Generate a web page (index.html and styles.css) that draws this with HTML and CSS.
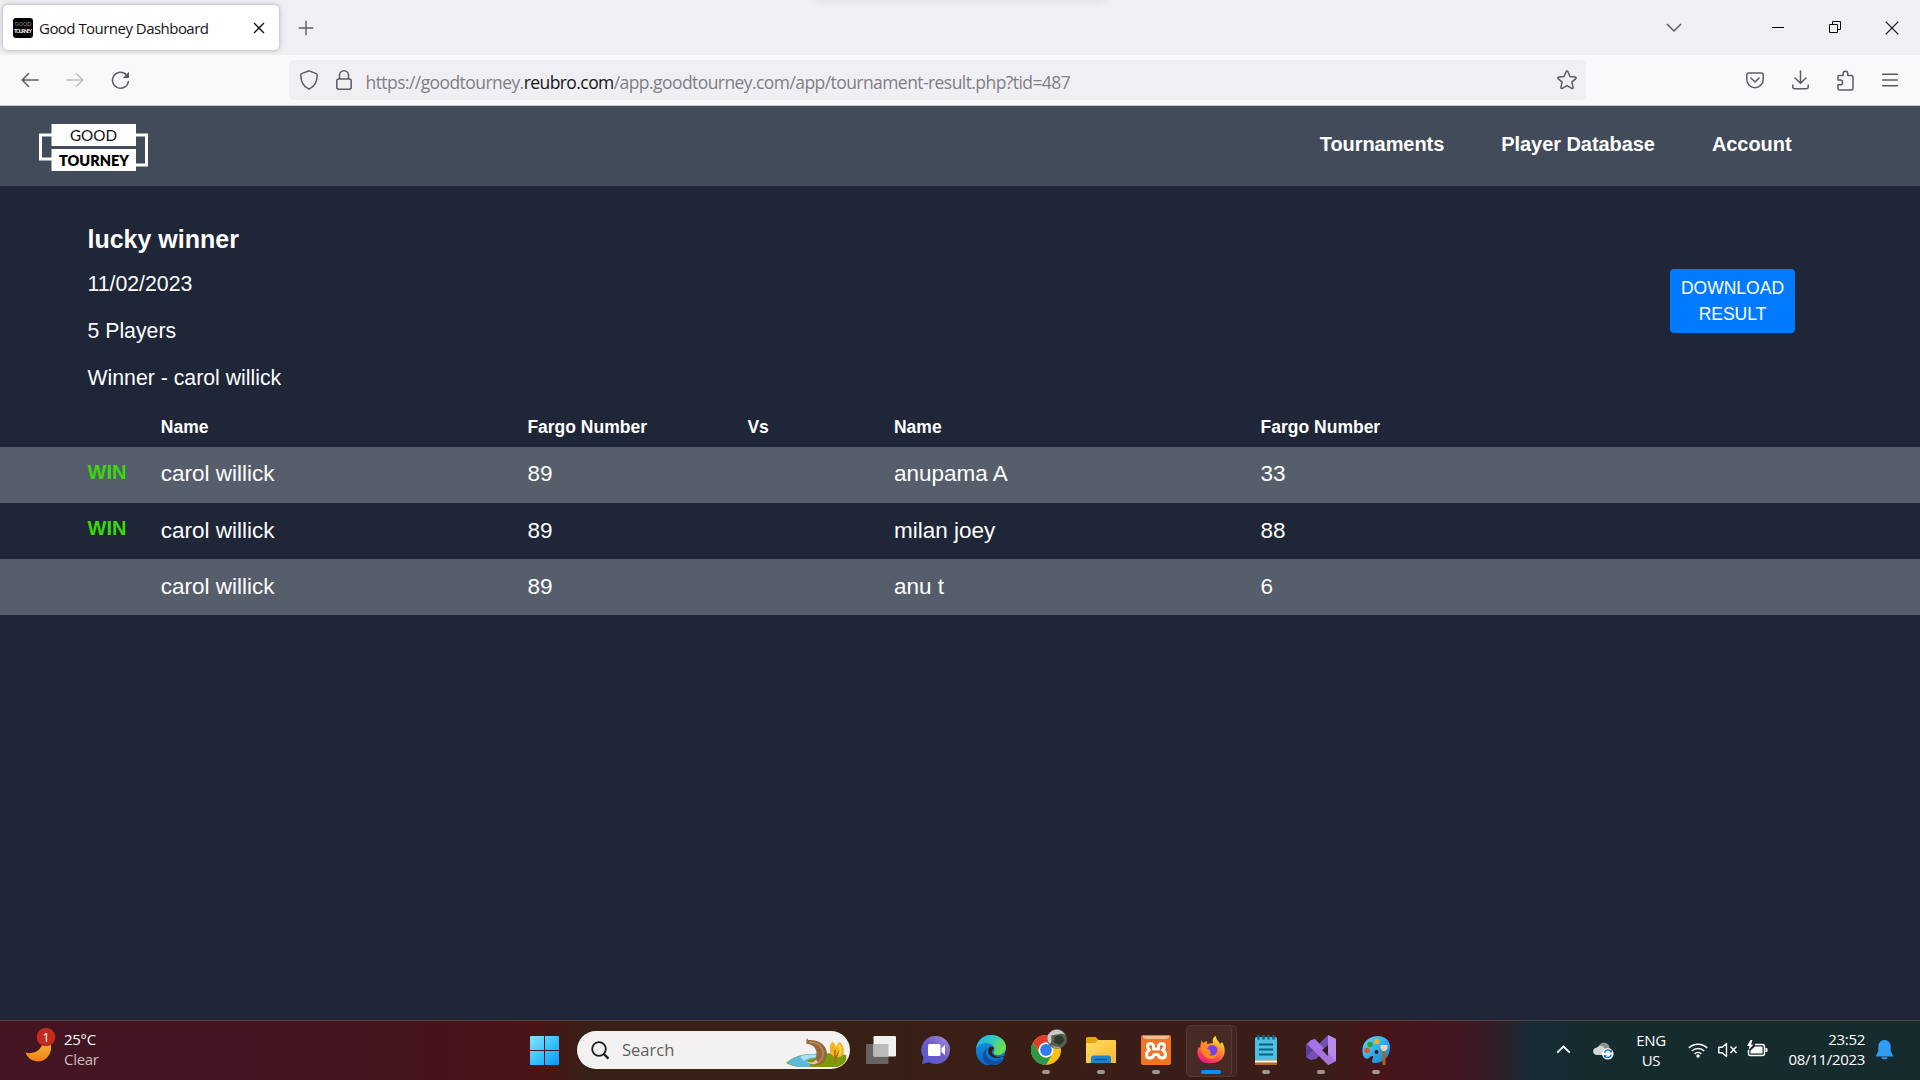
FILE: index.html
```
<!DOCTYPE html>
<html lang="en">
<head>
<meta charset="utf-8">
<title>Good Tourney Dashboard</title>
<link rel="stylesheet" href="styles.css">
</head>
<body>
<div class="tabstrip">
  <div class="tab">
    <svg class="favicon" width="20" height="20" viewBox="0 0 20 20"><rect width="20" height="20" rx="3" fill="#000"/><text x="10" y="8" text-anchor="middle" class="fav-top">GOOD</text><text x="10" y="15" text-anchor="middle" class="fav-bottom" textLength="18">TOURNEY</text></svg>
    <span class="tab-title">Good Tourney Dashboard</span>
    <svg class="tab-close" width="12" height="12" viewBox="0 0 12 12"><path d="M1 1l10 10M11 1L1 11" stroke="#15141a" stroke-width="1.4"/></svg>
  </div>
  <svg class="newtab" width="16" height="16" viewBox="0 0 16 16"><path d="M8 .7v14.6M.7 8h14.6" stroke="#5b5b66" stroke-width="1.4"/></svg>
  <div class="top-glow"></div>
  <div class="window-controls">
    <svg width="16" height="10" viewBox="0 0 16 10"><path d="M1 1l7 7 7-7" fill="none" stroke="#5b5b66" stroke-width="1.5"/></svg>
    <svg width="12" height="13" viewBox="0 0 12 13"><path d="M0 6.5h12" stroke="#000"/></svg>
    <svg width="13" height="13" viewBox="0 0 13 13"><path d="M.5 3.5h8v8h-8zM3.500 3.500v-3h8v8h-3" fill="none" stroke="#000"/></svg>
    <svg width="14" height="14" viewBox="0 0 14 14"><path d="M.7.7l12.600 12.600M13.300.7L.7 13.300" stroke="#111" stroke-width="1.200"/></svg>
  </div>
</div>
<div class="toolbar">
  <div class="nav-buttons">
    <svg width="18" height="16" viewBox="0 0 18 16"><path d="M17.500 8H1.500M8 1.200L1.200 8 8 14.800" fill="none" stroke="#5b5b66" stroke-width="1.500"/></svg>
    <svg width="18" height="16" viewBox="0 0 18 16"><path d="M.5 8h16M10 1.200L16.800 8 10 14.800" fill="none" stroke="#bdbdc2" stroke-width="1.500"/></svg>
    <svg width="19" height="19" viewBox="0 0 19 19"><path d="M15.700 4.200A8 8 0 1 0 17.400 10.500" fill="none" stroke="#5b5b66" stroke-width="1.500" stroke-linecap="round"/><path d="M18 .7v6.200h-6.200z" fill="#5b5b66"/></svg>
  </div>
  <div class="urlbar">
    <svg class="shield" width="18" height="20" viewBox="0 0 18 20"><path d="M9 .9l7.400 2.700c.6.200.8.700.8 1.300 0 6.500-2.200 11.500-8.200 14.200C3 16.400.8 11.400.8 4.900c0-.6.2-1.100.8-1.300z" fill="none" stroke="#5b5b66" stroke-width="1.500"/></svg>
    <svg class="lock" width="16" height="20" viewBox="0 0 16 20"><rect x=".8" y="9" width="14.400" height="10.200" rx="2" fill="none" stroke="#5b5b66" stroke-width="1.500"/><path d="M3.500 9V5.300a4.500 4.500 0 0 1 9 0V9" fill="none" stroke="#5b5b66" stroke-width="1.500"/></svg>
    <span class="url">https://goodtourney.<b>reubro.com</b>/app.goodtourney.com/app/tournament-result.php?tid=487</span>
    <svg class="star" width="20" height="20" viewBox="0 0 20 20"><path d="M10 1.100c.4 0 .7.200.9.600l2.100 4.800 5.200.5c.9.100 1.200 1 .6 1.600l-3.900 3.500 1.200 5.200c.2.900-.7 1.500-1.400 1.100L10 15.700l-4.700 2.700c-.7.400-1.600-.2-1.400-1.100l1.200-5.200-3.900-3.500C.6 8 .9 7.100 1.800 7l5.200-.5 2.100-4.800c.2-.4.500-.6.900-.6z" fill="none" stroke="#5b5b66" stroke-width="1.500"/></svg>
  </div>
  <div class="toolbar-actions">
    <svg width="18" height="17" viewBox="0 0 18 17"><path d="M3 .9h12c1.300 0 2.200.9 2.200 2.200v4.400a8.200 8.200 0 0 1-16.400 0V3.100C.8 1.800 1.700.9 3 .9z" fill="none" stroke="#5b5b66" stroke-width="1.500"/><path d="M4.900 6L9 10l4.100-4" fill="none" stroke="#5b5b66" stroke-width="1.600" stroke-linecap="round"/></svg>
    <svg width="17" height="20" viewBox="0 0 17 20"><path d="M8.500 1v12M3 8l5.500 5.300L14 8M.8 15v1.700c0 1.200.8 2 2 2h11.400c1.200 0 2-.8 2-2V15" fill="none" stroke="#5b5b66" stroke-width="1.500" stroke-linecap="round"/></svg>
    <svg width="17" height="21" viewBox="0 0 17 21"><path d="M1 8V6.600c0-.8.500-1.200 1.200-1.200h3.900V3.600a2.300 2.300 0 0 1 4.700 0v1.800h3.700c.9 0 1.500.6 1.500 1.500v11.500c0 .9-.6 1.500-1.500 1.500H2.500c-.9 0-1.500-.6-1.500-1.500v-3.600h2.200a2.400 2.400 0 0 0 0-4.800H1z" fill="none" stroke="#5b5b66" stroke-width="1.500" stroke-linejoin="round"/></svg>
    <svg width="16" height="14" viewBox="0 0 16 14"><path d="M.7 1.300h14.600M.7 7h14.600M.7 12.700h14.600" stroke="#5b5b66" stroke-width="1.500" stroke-linecap="round"/></svg>
  </div>
</div>
<header class="site-header">
  <svg class="logo" width="110" height="48" viewBox="0 0 110 48">
    <path d="M13 11H1.500v24H13M96 11h11.500v30H96" fill="none" stroke="#fff" stroke-width="3"/>
    <rect x="12.500" y="0" width="84.500" height="22" fill="#fff"/><rect x="12.500" y="25" width="84.500" height="22" fill="#fff"/>
    <text x="31" y="16.500" class="logo-good" textLength="47" lengthAdjust="spacingAndGlyphs">GOOD</text>
    <text x="20" y="42" class="logo-tourney" textLength="70" lengthAdjust="spacingAndGlyphs">TOURNEY</text>
  </svg>
  <nav class="site-nav"><a>Tournaments</a><a>Player Database</a><a>Account</a></nav>
</header>
<main class="content">
  <section class="summary">
    <div>
      <h1>lucky winner</h1>
      <p>11/02/2023</p>
      <p>5 Players</p>
      <p>Winner - carol willick</p>
    </div>
    <a class="download">DOWNLOAD RESULT</a>
  </section>
  <section class="results">
    <div class="row head"><span></span><span>Name</span><span>Fargo Number</span><span>Vs</span><span>Name</span><span>Fargo Number</span></div>
    <div class="row shaded first"><span class="win">WIN</span><span>carol willick</span><span>89</span><span></span><span>anupama A</span><span>33</span></div>
    <div class="row"><span class="win">WIN</span><span>carol willick</span><span>89</span><span></span><span>milan joey</span><span>88</span></div>
    <div class="row shaded"><span></span><span>carol willick</span><span>89</span><span></span><span>anu t</span><span>6</span></div>
  </section>
</main>
<footer class="taskbar">
  <div class="weather">
    <svg width="32" height="37" viewBox="0 0 32 37">
      <defs><linearGradient id="moon" x1="0" y1="0" x2="0" y2="1"><stop offset="0" stop-color="#f8c437"/><stop offset="1" stop-color="#ef7d1a"/></linearGradient></defs>
      <path d="M.5 25.500c8 2.500 18-2 17.500-14h6c3 6 3 13-1 18-6 8-19 6-22.500-4z" fill="url(#moon)"/>
      <circle cx="21" cy="10" r="9.300" fill="#c42b1c"/>
      <text x="21" y="14.800" text-anchor="middle" class="badge-text">1</text>
    </svg>
    <div class="weather-text"><span>25°C</span><span class="dim">Clear</span></div>
  </div>
  <div class="dock">
    <svg class="start" width="29" height="29" viewBox="0 0 29 29"><defs><linearGradient id="win" x1="0" y1="0" x2="1" y2="1"><stop offset="0" stop-color="#8be0ff"/><stop offset=".5" stop-color="#3cc4fb"/><stop offset="1" stop-color="#0798fc"/></linearGradient></defs><path d="M1 0h13v14H0V1a1 1 0 0 1 1-1zM15 0h13a1 1 0 0 1 1 1v13H15zM0 15h14v14H1a1 1 0 0 1-1-1zM15 15h14v13a1 1 0 0 1-1 1H15z" fill="url(#win)"/></svg>
    <div class="search">
      <svg width="19" height="19" viewBox="0 0 19 19"><circle cx="8" cy="8" r="6.800" fill="none" stroke="#1f1f1f" stroke-width="1.800"/><path d="M12.800 13L17.500 17.700" stroke="#1f1f1f" stroke-width="2.400"/></svg>
      <span>Search</span>
      <svg class="scene" width="61" height="30" viewBox="0 0 61 30">
        <path d="M0 25c7-6 15-9 27-9 9-1 25-1 33 1 2 7-4 10-9 12H16C9 29 4 27 0 25z" fill="#7d9a0c"/>
        <path d="M1 24c8-5 15-8 25-8l14 1c-3 3-16 3-18 5s5 4 1 7h-10C7 28 3 26 1 24z" fill="#5db9dc"/>
        <path d="M14 19c5-3 14-3 22-1-6 2-14 1-18 5z" fill="#a9dff0"/>
        <path d="M20 23.500c7 2 11-2 10.500-9C30 9 26 6.500 20 5.500l1-3.500c12-1 20 5 20 14 0 6-4 11-10 11-5 0-9-1-11-3.500z" fill="#94693b"/>
        <path d="M23 4c9 0 14 5 14 12 0 5-3 8-6 9" fill="none" stroke="#b98c58" stroke-width="1.500"/>
        <path d="M20 23.500c4 1.500 8 1 10-2l2 3c-3 3-9 2-12-1z" fill="#dccba8"/>
        <path d="M20 3l1-3 2 3" fill="#a87c62"/>
        <path d="M44 11c0-5 2-8 3-7s3 3 3 6c1-5 4-7 5-5 4 5 4 13-1 14-5 1-11-2-10-8z" fill="#f0b51c"/>
        <path d="M49 12v14M54 12l-5 9" fill="none" stroke="#b5651b" stroke-width="1.500"/>
        <path d="M53 7c2 4 2 7 0 10" fill="none" stroke="#ffdc52" stroke-width="2"/>
      </svg>
    </div>
    <div class="apps">
      <div class="app"><svg width="30" height="28" viewBox="0 0 30 28"><rect y="8" width="22.500" height="20" rx="1" fill="#666463"/><rect x="7.500" width="22.500" height="20.500" rx="1" fill="#f1f1f1"/><path d="M7.500 8h15v12.500h-15z" fill="#bababa"/></svg></div>
      <div class="app"><svg width="30" height="29" viewBox="0 0 30 29"><defs><linearGradient id="chat" x1="0" y1="1" x2="1" y2="0"><stop offset="0" stop-color="#5059d0"/><stop offset=".5" stop-color="#6c5cc4"/><stop offset="1" stop-color="#a890de"/></linearGradient></defs><path d="M15 0a14 14 0 0 1 0 28c-2.500 0-5-.6-7-1.700L1 28l1.400-6.700A14 14 0 0 1 15 0z" fill="url(#chat)"/><rect x="7" y="8" width="12.500" height="12" rx="1.500" fill="#fff"/><path d="M20.500 12l3.500-3v10l-3.500-3z" fill="#fff"/></svg></div>
      <div class="app"><svg width="30" height="30" viewBox="0 0 30 30"><defs><linearGradient id="edgeTop" x1="0" y1="0" x2="1" y2=".5"><stop offset="0" stop-color="#28a9e4"/><stop offset=".5" stop-color="#2dc8c4"/><stop offset="1" stop-color="#70e04a"/></linearGradient><linearGradient id="edgeLow" x1="0" y1="0" x2="0" y2="1"><stop offset="0" stop-color="#1596e0"/><stop offset="1" stop-color="#0a67be"/></linearGradient></defs><path d="M0 15a15 15 0 0 1 30 0l-3 10a15 15 0 0 1-27-10z" fill="url(#edgeLow)"/><path d="M0 14C1 6 7 0 15 0c9 0 15 6 15 12 0 5-4 8-8 8-3 0-5-1-4-3 2-5-2-9-7-9C6 8 2 10 0 14z" fill="url(#edgeTop)"/><path d="M12 13c-3 3-3 8 1 11 4 3 10 3 15-1-3 5-8 7-13 7C9 29 6 24 7 19c.7-3 3-5 5-6z" fill="#0c4fa0"/><path d="M13 12.500c-2 4 0 9 5 10 4 .800 8 0 10.500-1.500l1.500-1v4l-2-1-1-2c-3 1.500-8 1-10-1.500s-1-4 1-6c0-2-3-3-5-1z" fill="#351d15"/></svg></div>
      <div class="app running"><svg width="36" height="36" viewBox="0 0 36 36"><circle cx="15" cy="21" r="15" fill="#fbc116"/><path d="M2 13.500A15 15 0 0 1 28 13.500H15A7.500 7.500 0 0 0 8.500 24.800z" fill="#e33b2e"/><path d="M2 13.500L8.500 24.800A7.500 7.500 0 0 0 21.500 24.800L15 36A15 15 0 0 1 2 13.500z" fill="#2a9a48"/><circle cx="15" cy="21" r="7.500" fill="#fff"/><circle cx="15" cy="21" r="5.900" fill="#317cf0"/><circle cx="26" cy="10" r="10" fill="#56604f"/><path d="M17 6c4-7 14-7 17 0-5-3-9 1-13 0-2 2 1 5-2 9-3-2-3-6-2-9z" fill="#c9cacb"/><path d="M24 8c4-3 9-1 9 4l-4 4-6-3z" fill="#2f382d"/><path d="M20 16c4 2 8 1 10 3-4 2-8 0-10-3z" fill="#a29b94"/></svg></div>
      <div class="app running"><svg width="30" height="27" viewBox="0 0 30 27"><defs><linearGradient id="folder" x1="0" y1="0" x2="1" y2="1"><stop offset="0" stop-color="#ffdc65"/><stop offset="1" stop-color="#fdb92c"/></linearGradient></defs><path d="M1.500 0h8l4 3.500V8H0V1.500A1.500 1.500 0 0 1 1.500 0z" fill="#e5a30c"/><path d="M12 3h17a1 1 0 0 1 1 1v22H0V6h9z" fill="url(#folder)"/><path d="M5 26v-5a2.500 2.500 0 0 1 2.500-2.500h15A2.500 2.500 0 0 1 25 21v5z" fill="#1588d8"/><path d="M9 22.500h12" stroke="#08508c" stroke-width="1.500"/></svg></div>
      <div class="app running"><svg width="30" height="30" viewBox="0 0 30 30"><rect width="30" height="30" rx="2" fill="#f07421"/><path d="M2 3V1h26v2l-3 1H5z" fill="#fbb98a"/><path d="M12.500 10.500C11 7.500 6.500 8 6.500 11.500c0 1.800 1 2.800 2 3.500-2 1-3 2.500-3 4.500 0 4.500 6.500 5 7.500 0h4c1 5 7.500 4.500 7.500 0 0-2-1-3.500-3-4.500 1-.7 2-1.700 2-3.500 0-3.500-4.500-4-6-1v3.500h-5z" fill="none" stroke="#fff" stroke-width="3" stroke-linejoin="round"/></svg></div>
      <div class="app active"><svg width="29" height="29" viewBox="0 0 29 29"><defs><linearGradient id="fox" x1=".8" y1="0" x2=".3" y2="1"><stop offset="0" stop-color="#fff14a"/><stop offset=".4" stop-color="#ff9630"/><stop offset=".75" stop-color="#ff4550"/><stop offset="1" stop-color="#ee1285"/></linearGradient></defs><path d="M4.500 4l1.500 3 4-2v3l6-1c-1-3 0-6 3-7 0 4 3 5 4 8l2-2c6 9 2 21-10 21C3 29-2 19 1.500 11l1.500 1z" fill="url(#fox)"/><circle cx="15" cy="15" r="6" fill="#7643e2"/><path d="M4 10c4-3 8-2 11 1l-5 2c3 0 4 2 3 4 4 1 7-1 7-5 3 5-1 11-6 11-6 0-11-7-10-13z" fill="#ff8a24"/><path d="M12 10c4-1 8 2 8 5s-4 6-8 4l3-2c-1-3-2-4-5-4z" fill="#7044e6"/></svg></div>
      <div class="app running"><svg width="23" height="31" viewBox="0 0 23 31"><rect y="2" width="22" height="28" rx="1.500" fill="#4fbfe0"/><path d="M0 25.500h22V30H0z" fill="#b8661d"/><path d="M0 25.500h22v2H0z" fill="#f6f0e8"/><path d="M4 9.500h14M4 14.500h14M4 19.500h14" stroke="#056080" stroke-width="1.800"/><path d="M3.500 1v2.500M8.500 1v2.500M13.500 1v2.500M18.500 1v2.500" stroke="#0a6d86" stroke-width="2.600" stroke-linecap="round"/></svg></div>
      <div class="app running"><svg width="30" height="30" viewBox="0 0 30 30"><path d="M0 9l5-3 3 4v11l-3 4-5-3z" fill="#5a3f95"/><path d="M22 0l8 4-20 20-5 1-5-3z" fill="#7750b5"/><path d="M22 0l8 4v22l-8 4z" fill="#b98bec"/><path d="M5 5l4-1 21 22-8 4L1 9z" fill="#a374e2"/><path d="M22 10v11l-6-6z" fill="#351c16"/></svg></div>
      <div class="app running"><svg width="29" height="30" viewBox="0 0 29 30"><defs><linearGradient id="pal" x1="0" y1="0" x2="1" y2="1"><stop offset="0" stop-color="#5dd8fb"/><stop offset="1" stop-color="#0a7fd5"/></linearGradient></defs><path d="M1 20C-2 8 7 1 16 1c8 0 13 6 12 13-1 9-9 15-16 14-3-1-2-3-1-5s-1-3-3-1c-2 3-6 2-7-2z" fill="url(#pal)"/><circle cx="5" cy="15.500" r="2.700" fill="#dd552d"/><circle cx="8" cy="9.500" r="2.700" fill="#35a026"/><circle cx="15" cy="6.500" r="2.700" fill="#f1b30e"/><circle cx="14.500" cy="17" r="2" fill="#3d1a18"/><path d="M18.500 10h7v3l-2 3h-3l-2-3z" fill="#ead4b8"/><path d="M20.500 16h3v14h-3z" fill="#a8650f"/></svg></div>
    </div>
  </div>
  <div class="tray">
    <svg width="15" height="9" viewBox="0 0 15 9"><path d="M1.200 7.600L7.500 1.500l6.300 6.100" fill="none" stroke="#fff" stroke-width="1.900"/></svg>
    <svg class="cloud" width="21" height="18" viewBox="0 0 21 18"><circle cx="11" cy="6" r="5.500" fill="#8d9294"/><path d="M4 5.500c3-3 8-1 8 3h4v4.500H3c-4-1-4-7 1-7.500z" fill="#d3d6d7"/><circle cx="14.800" cy="11.800" r="5.800" fill="#fff"/><path d="M11.500 11a3.600 3.600 0 0 1 6.500-1.500M18.200 12.500a3.600 3.600 0 0 1-6.500 1.500" fill="none" stroke="#1874c9" stroke-width="1.500"/><path d="M19 7.500v3h-3zM10.800 16v-3h3z" fill="#1874c9"/></svg>
    <div class="lang"><span>ENG</span><span>US</span></div>
    <svg class="wifi" width="20" height="16" viewBox="0 0 20 16"><path d="M.8 6a13 13 0 0 1 18.400 0M3.800 9a8.800 8.800 0 0 1 12.400 0M6.700 11.900a4.700 4.700 0 0 1 6.600 0" fill="none" stroke="#fff" stroke-width="1.500"/><circle cx="10" cy="14" r="1.700" fill="#fff"/></svg>
    <svg class="speaker" width="20" height="16" viewBox="0 0 20 16"><path d="M.8 5.200h3.400L8.500 1.500v13l-4.300-3.700H.8zM12.500 4.500l6 6.500M18.500 4.500l-6 6.500" fill="none" stroke="#fff" stroke-width="1.400" stroke-linejoin="round"/></svg>
    <svg class="battery" width="21" height="17" viewBox="0 0 21 17"><path d="M8 4.500h7.500c1.300 0 2 .7 2 2v7c0 1.300-.7 2-2 2H3.500c-1.300 0-2-.7-2-2V10" fill="none" stroke="#fff" stroke-width="1.400"/><path d="M8 6.500h7.500v7h-12v-3zM18.500 8h1c.8 0 1 .5 1 1v2c0 .5-.2 1-1 1h-1z" fill="#fff"/><path d="M3.500 0L0 6h2.500L1.500 10 6.500 4.500H4L5.500 0z" fill="#fff"/></svg>
    <div class="clock"><span>23:52</span><span>08/11/2023</span></div>
    <svg class="bell" width="17" height="20" viewBox="0 0 17 20"><path d="M8.500 0a6 6 0 0 1 6.200 6v5l2.100 4.500v.9H.2v-.9L2.300 11V6A6 6 0 0 1 8.500 0zM5.500 17.300h6a3 2 0 0 1-6 0z" fill="#2f9df5"/></svg>
  </div>
</footer>
</body>
</html>
```
FILE: styles.css
```
* { box-sizing: border-box; }
body {
  margin: 0;
  width: 1920px;
  height: 1080px;
  overflow: hidden;
  display: flex;
  flex-direction: column;
  background: #1e2638;
  font-family: "Liberation Sans", Arial, sans-serif;
  color: #fff;
}
svg { display: block; flex: none; }

/* Browser chrome */
.tabstrip {
  position: relative;
  flex: none;
  height: 55px;
  display: flex;
  align-items: center;
  padding-left: 3px;
  background: #f0f0f4;
  font-family: "Open Sans", "Noto Sans", sans-serif;
}
.tab {
  width: 276px;
  height: 45px;
  display: flex;
  align-items: center;
  padding: 0 14px 0 10px;
  border-radius: 5px;
  background: #fff;
  box-shadow: 0 0 5px rgba(90, 90, 105, .5);
}
.fav-top { font: 5.500px "Lato", sans-serif; fill: #999; }
.fav-bottom { font: bold 5px "Lato", sans-serif; fill: #eee; }
.tab-title {
  flex: 1;
  margin-left: 6px;
  font-size: 15px;
  letter-spacing: -.53px;
  line-height: 20px;
  color: #15141a;
  white-space: nowrap;
}
.newtab { margin-left: 18.500px; }
.top-glow {
  position: absolute;
  top: -3px;
  left: 816px;
  width: 290px;
  height: 3px;
  box-shadow: 0 0 7px rgba(120, 120, 140, .3);
}
.window-controls {
  margin-left: auto;
  display: flex;
  align-items: center;
  padding-right: 21px;
}
.window-controls svg:nth-child(2) { margin-left: 90px; }
.window-controls svg:nth-child(3) { margin-left: 45px; }
.window-controls svg:nth-child(4) { margin-left: 43px; }
.toolbar {
  flex: none;
  height: 51px;
  display: flex;
  align-items: center;
  background: #f9f9fb;
  border-bottom: 1px solid #c8c8ce;
  font-family: "Open Sans", "Noto Sans", sans-serif;
}
.nav-buttons {
  width: 289px;
  display: flex;
  align-items: center;
  gap: 27px;
  padding-left: 21px;
}
.urlbar {
  width: 1297px;
  height: 40px;
  display: flex;
  align-items: center;
  padding: 0 9px 0 11px;
  border-radius: 5px;
  background: #f0f0f4;
}
.lock { margin-left: 18px; }
.url {
  flex: 1;
  margin-left: 13.500px;
  padding-top: 3px;
  font-size: 17.500px;
  letter-spacing: -.57px;
  color: #7f7f86;
  white-space: nowrap;
}
.url b { font-weight: 400; color: #15141a; }
.toolbar-actions {
  flex: 1;
  display: flex;
  align-items: center;
  justify-content: space-between;
  padding: 0 22px 0 160px;
}

/* Site header */
.site-header {
  flex: none;
  height: 80px;
  display: flex;
  justify-content: space-between;
  padding: 0 128.500px 0 39px;
  background: #424b5a;
}
.logo { margin-top: 18px; }
.logo-good { font: 400 16px "Lato", sans-serif; fill: #111; }
.logo-tourney { font: 800 15px "Lato", sans-serif; fill: #000; }
.site-nav {
  display: flex;
  gap: 57px;
  font-size: 20px;
  font-weight: 700;
  line-height: 76px;
  letter-spacing: -.06px;
}

/* Tournament summary */
.content { flex: 1; padding-top: 38px; }
.summary {
  display: flex;
  justify-content: space-between;
  align-items: flex-start;
  height: 177px;
  padding: 0 125px 0 87.500px;
}
.summary h1 { margin: 0 0 7px; font-size: 25px; line-height: 30px; }
.summary p { margin: 0; font-size: 21.250px; line-height: 47px; }
.download {
  width: 125px;
  margin-top: 45px;
  padding: 6px 10px 5.500px;
  border-radius: 4px;
  background: #007bff;
  font-size: 17.500px;
  line-height: 26.250px;
  text-align: center;
}

/* Results table */
.row {
  display: grid;
  grid-template-columns: 73.300px 366.600px 220px 146.600px 366.600px 1fr;
  height: 56px;
  padding-left: 87.500px;
  font-size: 22.500px;
  line-height: 56px;
}
.head {
  height: 46px;
  padding-top: 6px;
  font-size: 17.500px;
  font-weight: 700;
  line-height: 40px;
}
.shaded { background: #565e6b; }
.first { line-height: 54px; }
.win { font-size: 20px; font-weight: 700; line-height: 51px; color: #3bd60b; }

/* Taskbar */
.taskbar {
  flex: none;
  height: 60px;
  display: flex;
  align-items: stretch;
  border-top: 1px solid #55413f;
  background: linear-gradient(90deg, #431523 0, #431521 280px, #46131b 440px, #4a1515 545px, #382016 585px, #382016 850px, #3a1d16 1130px, #3a1d16 1330px, #47141a 1385px, #431621 1450px, #351b27 1490px, #172c35 1530px, #152b2e 1600px, #152b2e 1920px);
  font-family: "Open Sans", "Noto Sans", sans-serif;
  font-size: 15px;
  line-height: 20px;
}
.weather {
  width: 530px;
  display: flex;
  padding: 6px 0 0 25px;
}
.badge-text { font: 12.500px "Open Sans", sans-serif; fill: #fff; }
.weather-text {
  display: flex;
  flex-direction: column;
  margin: 2px 0 0 7px;
  letter-spacing: -.3px;
}
.dim { color: #c9bcc0; }
.dock { display: flex; align-items: center; padding-bottom: 1px; }
.search {
  width: 273px;
  height: 38px;
  display: flex;
  align-items: center;
  margin-left: 18px;
  padding: 0 3px 0 14px;
  border-radius: 19px;
  background: #f3f2f1;
  color: #606060;
  font-size: 16.500px;
}
.search span { flex: 1; margin-left: 12px; }
.scene { margin-top: 5px; }
.apps { display: flex; margin-left: 3.500px; }
.app {
  position: relative;
  width: 55px;
  height: 58px;
  display: flex;
  align-items: center;
  justify-content: center;
}
.app:nth-child(4) svg { margin: -6px 0 0 6px; }
.running::after,
.active::after {
  content: "";
  position: absolute;
  left: 23.500px;
  bottom: 5px;
  width: 8px;
  height: 4px;
  border-radius: 2px;
  background: #a39390;
}
.active::before {
  content: "";
  position: absolute;
  left: 2px;
  top: 4px;
  width: 44px;
  height: 50px;
  border: 1px solid #563a34;
  border-radius: 5px;
  background: #472a24;
  box-shadow: 5px 0 0 -1px #412620, 5px 0 0 #50342e;
}
.active svg { position: relative; }
.active::after { left: 17.500px; width: 20px; background: #0090ff; }
.tray {
  flex: 1;
  display: flex;
  align-items: center;
  justify-content: flex-end;
  padding: 0 27px 2px 0;
}
.cloud { margin: 3px 0 0 22px; }
.lang {
  width: 40px;
  margin-left: 17px;
  display: flex;
  flex-direction: column;
  text-align: center;
  letter-spacing: -.3px;
}
.wifi { margin-left: 17px; }
.speaker { margin-left: 10px; }
.battery { margin-left: 9px; margin-top: -3px; }
.clock {
  width: 97px;
  display: flex;
  flex-direction: column;
  margin-top: -2px;
  text-align: right;
  letter-spacing: -.3px;
  white-space: nowrap;
}
.bell { margin-left: 11px; }
```
